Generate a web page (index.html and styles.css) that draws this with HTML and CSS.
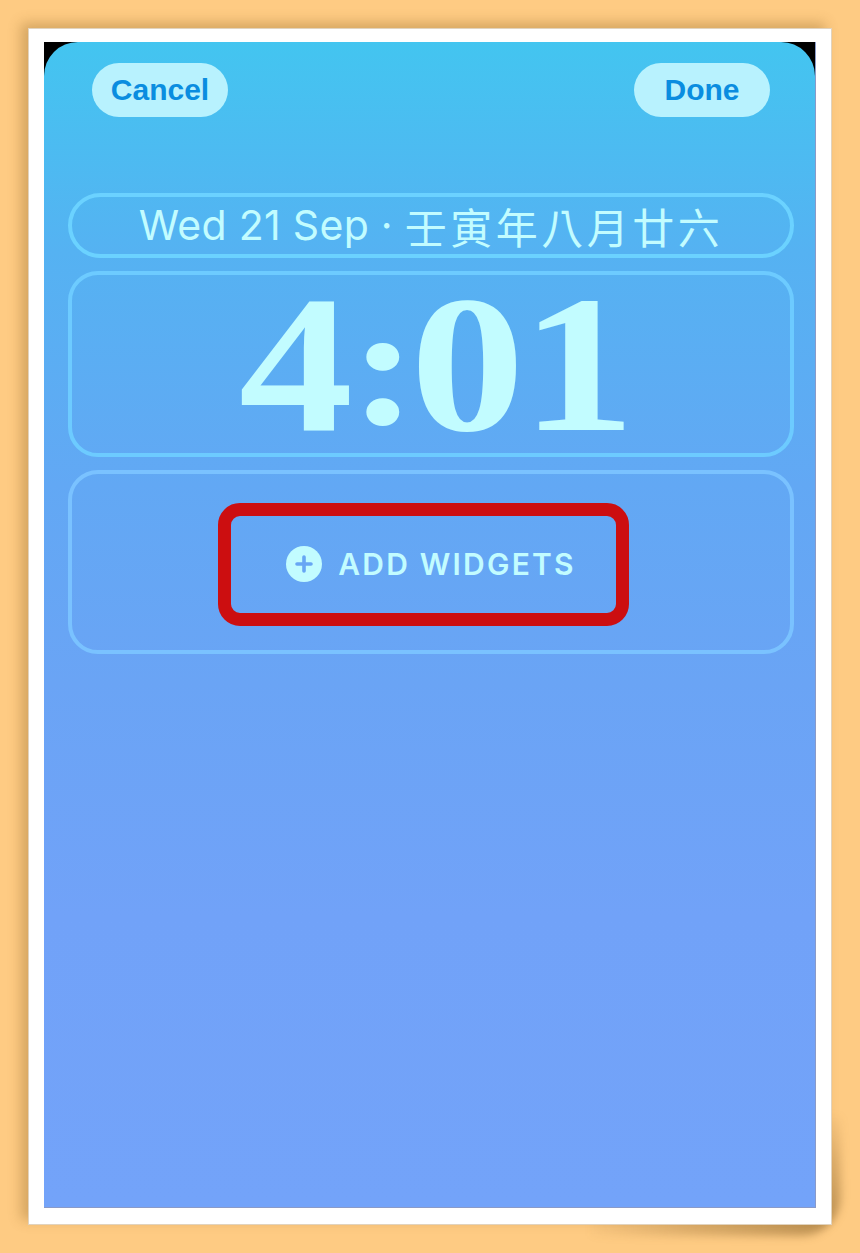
FILE: index.html
```html
<!DOCTYPE html>
<html lang="en">
<head>
<meta charset="utf-8">
<title>Lock Screen Edit</title>
<link rel="stylesheet" href="styles.css">
</head>
<body>
<div class="card">
  <div class="screen">
    <div class="wall">
      <div class="topbar">
        <div class="pill">Cancel</div>
        <div class="pill">Done</div>
      </div>
      <div class="stack">
        <div class="box date"><span class="lat">Wed 21 Sep · </span><span class="cjk">壬寅年八月廿六</span></div>
        <div class="box time"><span class="clock">4<span class="colon">:</span>01</span></div>
        <div class="box add">
          <div class="addrow">
            <svg class="plus" width="36" height="36" viewBox="0 0 36 36">
              <circle cx="18" cy="18" r="18" fill="#C2FCFF"/>
              <path d="M18 11 V25 M11 18 H25" stroke="#67A6F4" stroke-width="3.6" stroke-linecap="round"/>
            </svg>
            <span class="addtext">ADD WIDGETS</span>
          </div>
          <div class="highlight"></div>
        </div>
      </div>
    </div>
  </div>
</div>
</body>
</html>
```
FILE: styles.css
```css
html, body {
  margin: 0;
  padding: 0;
}
body {
  background: #FECB83;
  width: 860px;
  height: 1253px;
  overflow: hidden;
  font-family: "Liberation Sans", Arial, sans-serif;
}
.card {
  position: relative;
  margin: 28px 0 0 28px;
  width: 804px;
  height: 1197px;
  box-sizing: border-box;
  background: #ffffff;
  padding: 13px 15px 16px 15px;
  border: 1px solid rgba(170, 130, 70, 0.35);
  box-shadow: -7px -5px 12px rgba(120, 80, 20, 0.3);
}
.card::after {
  content: "";
  position: absolute;
  right: -10px;
  bottom: -12px;
  width: 250px;
  height: 120px;
  z-index: -1;
  border-radius: 0 0 40px 0;
  background: radial-gradient(ellipse at 95% 90%, rgba(110, 75, 25, 0.45) 0%, rgba(110, 75, 25, 0.2) 45%, rgba(110, 75, 25, 0) 75%);
  filter: blur(4px);
}
.screen {
  height: 100%;
  background: #000;
  box-sizing: border-box;
  border-right: 1px solid #8a9ac8;
  border-bottom: 1px solid #8a9ac8;
}
.wall {
  height: 100%;
  border-radius: 34px 34px 0 0;
  background: linear-gradient(180deg, #43C5F0 0%, #55B2F2 18%, #62A8F4 38%, #6AA4F5 55%, #71A2F8 75%, #73A3F9 100%);
}
.topbar {
  display: flex;
  justify-content: space-between;
  padding: 21px 45px 0 48px;
}
.pill {
  width: 136px;
  height: 54px;
  border-radius: 27px;
  background: #B8F2FE;
  color: #0A8DE0;
  font-weight: 700;
  font-size: 30px;
  display: flex;
  align-items: center;
  justify-content: center;
}
.stack {
  display: flex;
  flex-direction: column;
  gap: 13px;
  margin: 76px 21px 0 24px;
}
.box {
  box-sizing: border-box;
  border: 4px solid rgba(130, 225, 255, 0.75);
  border-radius: 30px;
  color: #C2FCFF;
}
.date {
  height: 65px;
  border-radius: 33px;
  border-color: #6BD2FF;
  display: flex;
  align-items: center;
  justify-content: center;
  line-height: 1;
  white-space: pre;
}
.lat {
  font-family: Inter, "Liberation Sans", sans-serif;
  font-size: 41px;
  font-weight: 400;
  letter-spacing: 0.3px;
}
.cjk {
  font-family: "Noto Sans CJK TC", "Noto Sans CJK SC", sans-serif;
  font-size: 42px;
  font-weight: 400;
  letter-spacing: 3.5px;
}
.time {
  height: 186px;
  border-color: #6DCBFF;
  display: flex;
  align-items: center;
  justify-content: center;
  font-family: "Liberation Serif", "Times New Roman", serif;
  font-weight: 700;
  font-size: 194px;
  line-height: 1;
  padding-top: 2px;
}
.clock {
  display: inline-block;
  transform: scaleX(1.18);
  letter-spacing: -3px;
  padding-left: 8px;
}
.colon {
  font-size: 172px;
  letter-spacing: -6px;
  position: relative;
  top: -6px;
}
.add {
  position: relative;
  height: 184px;
  border-color: #7AC2FF;
  display: flex;
  align-items: center;
  justify-content: center;
}
.addrow {
  display: flex;
  align-items: center;
  gap: 16px;
  margin-top: 4px;
}
.addtext {
  font-family: Inter, "Liberation Sans", sans-serif;
  font-weight: 600;
  font-size: 30px;
  letter-spacing: 2.2px;
  color: #C2FCFF;
}
.highlight {
  position: absolute;
  left: 146px;
  top: 29px;
  width: 411px;
  height: 123px;
  box-sizing: border-box;
  border: 13px solid #CC0E10;
  border-radius: 22px;
}
```
